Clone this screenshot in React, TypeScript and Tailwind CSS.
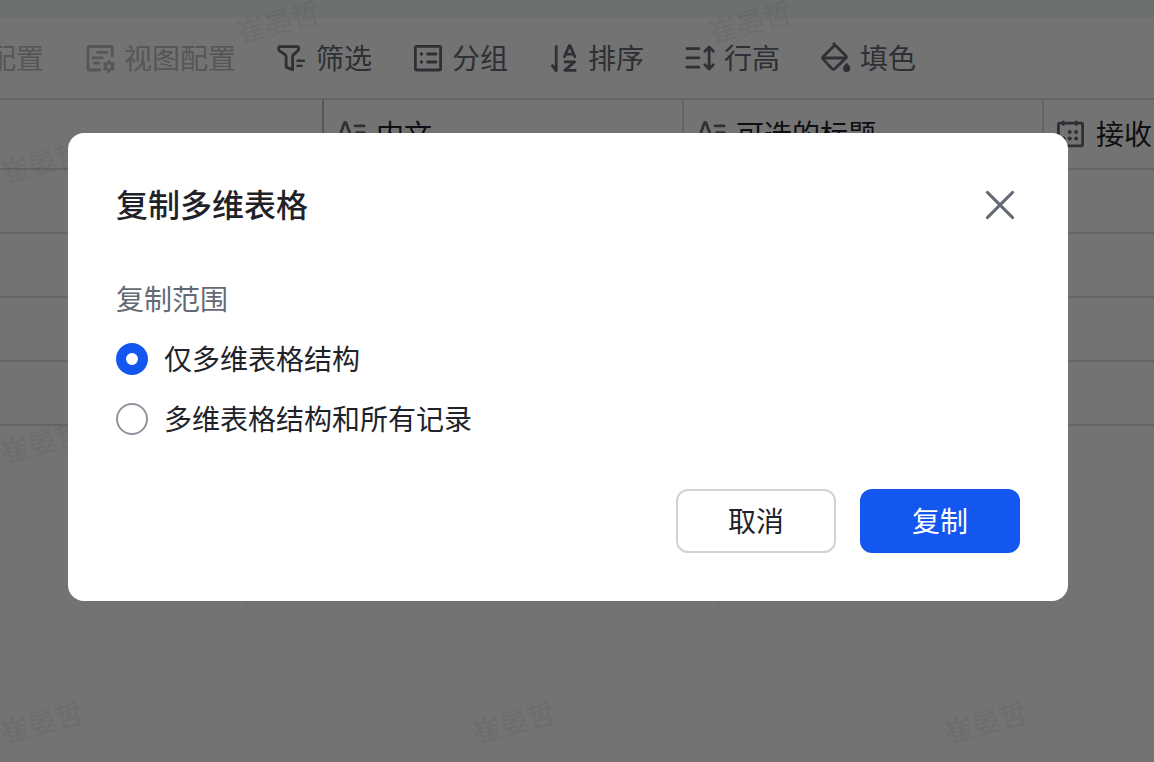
import { useState } from "react";
import type { ReactNode } from "react";

interface IconProps {
  children: ReactNode;
}

function Icon({ children }: IconProps) {
  return (
    <svg
      viewBox="0 0 32 32"
      className="size-8 shrink-0"
      fill="none"
      stroke="currentColor"
      strokeWidth="2.8"
      strokeLinecap="round"
      strokeLinejoin="round"
      aria-hidden="true"
    >
      {children}
    </svg>
  );
}

function ViewConfigIcon() {
  return (
    <Icon>
      <path d="M28.2 14V5.5a1 1 0 0 0-1-1H5a1 1 0 0 0-1 1V27a1 1 0 0 0 1 1h10.5" />
      <path d="M13.5 10.4h9.5M9 15.9h9.5M10.5 21.2h4.5" />
      <circle cx="25" cy="24.4" r="3.4" />
      <path
        d="M25 19.4v1M25 28.4v1M20.7 21.9l.9.5M28.4 26.4l.9.5M20.7 26.9l.9-.5M28.4 22.4l.9-.5"
        strokeWidth="3"
      />
    </Icon>
  );
}

function FilterIcon() {
  return (
    <Icon>
      <path d="M3.5 4.6h18a1 1 0 0 1 1 1v2a1.5 1.5 0 0 1-.5 1.1l-4.7 4.2a2 2 0 0 0-.7 1.5v13.4l-6-2.4a.8.8 0 0 1-.5-.8V14.4a2 2 0 0 0-.7-1.5L3.3 8.7a1.5 1.5 0 0 1-.6-1.1v-2a1 1 0 0 1 .8-1z" />
      <path d="M21.5 18.8h6.5M21.5 23.9h4.2" strokeWidth="2.4" />
    </Icon>
  );
}

function GroupIcon() {
  return (
    <Icon>
      <rect x="3.4" y="4.4" width="25.2" height="23.6" rx="1.2" />
      <path d="M15.5 12h8.5M15.5 20h8.5" />
      <circle cx="9.4" cy="12" r="1.7" fill="currentColor" stroke="none" />
      <circle cx="9.4" cy="20" r="1.7" fill="currentColor" stroke="none" />
    </Icon>
  );
}

function SortIcon() {
  return (
    <Icon>
      <path d="M8.2 4.6v24.2L4.4 23.6" />
      <path d="M6.4 25.2h1.4v2z" fill="currentColor" />
      <path d="M16.4 14.8l4.5-10.6a.8.8 0 0 1 1.5 0l4.5 10.6M17.8 12.2h7.6" />
      <path d="M17 19.8h9.6l-9.8 8.6h10.4" />
    </Icon>
  );
}

function RowHeightIcon() {
  return (
    <Icon>
      <path d="M2.9 6.7h12M2.9 15.9h12M2.9 25.2h12" />
      <path d="M25.1 5.6v20.8M20.9 9.2l4.2-4.1 4.2 4.1M20.9 22.8l4.2 4.1 4.2-4.1" />
    </Icon>
  );
}

function FillIcon() {
  return (
    <Icon>
      <path d="M13.8 1.8l12.2 12.3a1.4 1.4 0 0 1 0 2L15 26.6a2.2 2.2 0 0 1-3.1 0L3.3 17.4a2 2 0 0 1 0-2.8L15 3" />
      <path d="M3.4 16h22.4" />
      <path
        d="M26.7 20.6c2 2.3 3.6 4 3.6 5.9a3.6 3.6 0 0 1-7.2 0c0-1.9 1.6-3.6 3.6-5.9z"
        fill="currentColor"
        stroke="none"
      />
    </Icon>
  );
}

function TextFieldIcon() {
  return (
    <Icon>
      <path d="M2 22.6L8.5 4.8a.8.8 0 0 1 1.5 0l6.5 17.8M4.6 17h9.6" />
      <path d="M19 7.8h9.2M20.6 14.6h7.6M22.2 21.4h6" />
    </Icon>
  );
}

function CalendarIcon() {
  return (
    <Icon>
      <rect x="2.4" y="5.2" width="24.2" height="22.6" rx="1.2" />
      <path d="M7.4 4v2.6M20.4 4v2.6" />
      <g fill="currentColor" stroke="none">
        <circle cx="13.7" cy="14" r="2" />
        <circle cx="20.1" cy="14" r="2" />
        <circle cx="7.5" cy="20.6" r="2" />
        <circle cx="13.7" cy="20.6" r="2" />
        <circle cx="20.1" cy="20.6" r="2" />
      </g>
    </Icon>
  );
}

const TOOLS = [
  { label: "筛选", icon: <FilterIcon /> },
  { label: "分组", icon: <GroupIcon /> },
  { label: "排序", icon: <SortIcon /> },
  { label: "行高", icon: <RowHeightIcon /> },
  { label: "填色", icon: <FillIcon /> },
];

function Toolbar() {
  return (
    <div className="flex h-[82px] items-center gap-10 overflow-hidden border-b-2 border-[#dee0e3] whitespace-nowrap text-[#646a73]">
      <button disabled className="flex w-11 shrink-0 justify-end text-[#bbbfc4]">
        配置
      </button>
      <button disabled className="flex shrink-0 items-center gap-2 text-[#bbbfc4]">
        <ViewConfigIcon />
        视图配置
      </button>
      {TOOLS.map((tool) => (
        <button key={tool.label} className="flex shrink-0 items-center gap-2">
          {tool.icon}
          {tool.label}
        </button>
      ))}
    </div>
  );
}

const COLUMNS = [
  { label: "内文", icon: <TextFieldIcon /> },
  { label: "可选的标题", icon: <TextFieldIcon /> },
  { label: "接收", icon: <CalendarIcon /> },
];

function Grid() {
  return (
    <table className="w-full table-fixed border-separate border-spacing-0">
      <colgroup>
        <col className="w-[324px]" />
        <col className="w-[360px]" />
        <col className="w-[360px]" />
        <col />
      </colgroup>
      <thead>
        <tr className="h-[70px]">
          <td className="border-r-2 border-b-2 border-r-[#bbbfc4] border-b-[#dee0e3]" />
          {COLUMNS.map((column) => (
            <th
              key={column.label}
              className="overflow-hidden border-r-2 border-b-2 border-[#dee0e3] p-0 pl-3 font-normal last:border-r-0"
            >
              <div className="flex items-center gap-2 whitespace-nowrap">
                <span className="text-[#646a73]">{column.icon}</span>
                {column.label}
              </div>
            </th>
          ))}
        </tr>
      </thead>
      <tbody>
        {[1, 2, 3, 4].map((row) => (
          <tr key={row} className="h-16">
            <td colSpan={4} className="border-b-2 border-[#dee0e3]" />
          </tr>
        ))}
      </tbody>
    </table>
  );
}

/** Staggered user-name watermark, every other row shifted by half a step */
function Watermark() {
  return (
    <div
      aria-hidden="true"
      className="pointer-events-none absolute inset-0 overflow-hidden font-medium text-[#1f2329]/8"
    >
      <div className="-mt-12">
        {[0, 1, 2, 3, 4, 5].map((row) => (
          <div key={row} className="flex h-[140px] items-center odd:pl-[236px]">
            {[0, 1, 2].map((cell) => (
              <div key={cell} className="w-[472px] shrink-0">
                <span className="inline-block -rotate-15">崔晏哲</span>
              </div>
            ))}
          </div>
        ))}
      </div>
    </div>
  );
}

const SCOPES = [
  { value: "structure", label: "仅多维表格结构" },
  { value: "all", label: "多维表格结构和所有记录" },
];

function CopyDialog() {
  const [scope, setScope] = useState("structure");

  return (
    <div
      role="dialog"
      aria-modal="true"
      aria-labelledby="copy-title"
      className="w-full max-w-[1000px] rounded-2xl bg-white p-12"
    >
      <div className="flex items-center justify-between">
        <h2 id="copy-title" className="text-[32px] leading-[48px] font-medium">
          复制多维表格
        </h2>
        <button aria-label="关闭" className="flex size-10 items-center justify-center text-[#646a73]">
          <svg viewBox="0 0 32 32" className="size-8" stroke="currentColor" strokeWidth="3" strokeLinecap="round">
            <path d="M3.4 3.4l25.2 25.2M28.6 3.4L3.4 28.6" />
          </svg>
        </button>
      </div>

      <fieldset className="mt-12">
        <legend className="text-[#646a73]">复制范围</legend>
        <div className="mt-4 flex flex-col items-start gap-4">
          {SCOPES.map((item) => (
            <label key={item.value} className="flex items-center gap-4">
              <input
                type="radio"
                name="scope"
                value={item.value}
                checked={scope === item.value}
                onChange={() => setScope(item.value)}
                className="size-8 shrink-0 appearance-none rounded-full border-2 border-[#8f959e] bg-white checked:border-[10px] checked:border-[#1456f0]"
              />
              {item.label}
            </label>
          ))}
        </div>
      </fieldset>

      <div className="mt-12 flex justify-end gap-6">
        <button className="h-16 w-40 rounded-xl border-2 border-[#d0d3d6] bg-white">取消</button>
        <button className="h-16 w-40 rounded-xl bg-[#1456f0] text-white">复制</button>
      </div>
    </div>
  );
}

export default function App() {
  return (
    <div className="relative min-h-screen overflow-hidden bg-white font-['Noto_Sans','Noto_Sans_CJK_SC',sans-serif] text-[28px] leading-[44px] text-[#1f2329]">
      <div className="h-[18px] bg-[#f0f8f4]" />
      <Toolbar />
      <Grid />
      <Watermark />
      <div className="absolute inset-0 flex items-start justify-center bg-black/55 pt-[133px] pr-[18px]">
        <CopyDialog />
      </div>
    </div>
  );
}
